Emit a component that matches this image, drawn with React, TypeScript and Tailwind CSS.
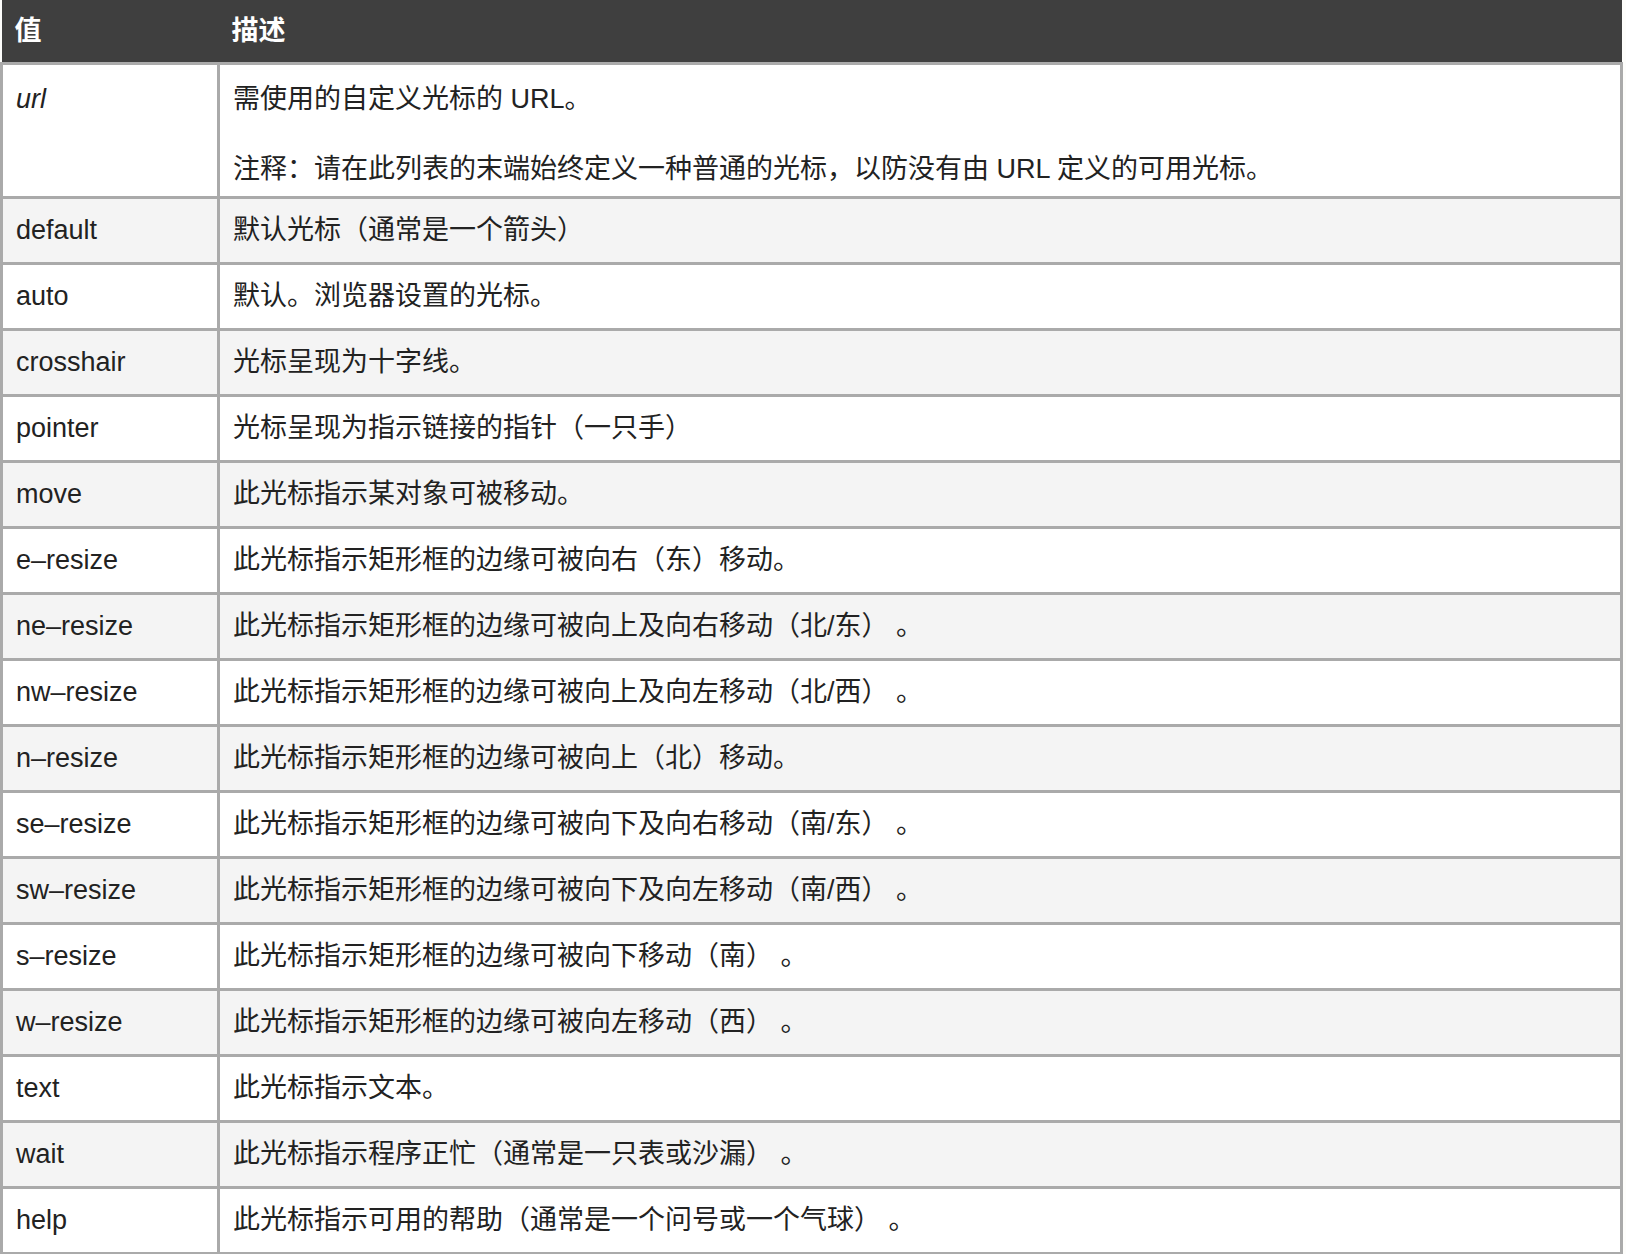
const rows: [string, string][] = [
  ["default", "默认光标（通常是一个箭头）"],
  ["auto", "默认。浏览器设置的光标。"],
  ["crosshair", "光标呈现为十字线。"],
  ["pointer", "光标呈现为指示链接的指针（一只手）"],
  ["move", "此光标指示某对象可被移动。"],
  ["e-resize", "此光标指示矩形框的边缘可被向右（东）移动。"],
  ["ne-resize", "此光标指示矩形框的边缘可被向上及向右移动（北/东） 。"],
  ["nw-resize", "此光标指示矩形框的边缘可被向上及向左移动（北/西） 。"],
  ["n-resize", "此光标指示矩形框的边缘可被向上（北）移动。"],
  ["se-resize", "此光标指示矩形框的边缘可被向下及向右移动（南/东） 。"],
  ["sw-resize", "此光标指示矩形框的边缘可被向下及向左移动（南/西） 。"],
  ["s-resize", "此光标指示矩形框的边缘可被向下移动（南） 。"],
  ["w-resize", "此光标指示矩形框的边缘可被向左移动（西） 。"],
  ["text", "此光标指示文本。"],
  ["wait", "此光标指示程序正忙（通常是一只表或沙漏） 。"],
  ["help", "此光标指示可用的帮助（通常是一个问号或一个气球） 。"],
];

export default function App() {
  return (
    <div className="w-[1626px] h-[1254px] bg-[#fdfdfb] overflow-hidden">
      <table
        className="w-[1623px] border-collapse text-[27px] text-[#222]"
        style={{ fontFamily: '"Liberation Sans", "Noto Sans CJK SC", sans-serif' }}
      >
        <thead>
          <tr className="h-[63px] bg-[#3f3f3f] text-white font-bold">
            <th className="w-[217px] text-left px-[13px] align-middle">值</th>
            <th className="text-left px-[13px] align-middle">描述</th>
          </tr>
        </thead>
        <tbody>
          <tr className="h-[134px] bg-white">
            <td className="border-[3px] border-[#aaa] px-[13px] align-top pt-[14px] italic">url</td>
            <td className="border-[3px] border-[#aaa] px-[13px] align-top pt-[14px]">
              <p>需使用的自定义光标的 URL。</p>
              <p className="mt-[30px]">注释：请在此列表的末端始终定义一种普通的光标，以防没有由 URL 定义的可用光标。</p>
            </td>
          </tr>
          {rows.map(([v, d], i) => (
            <tr key={v} className={`h-[66px] ${i % 2 === 0 ? "bg-[#f4f4f4]" : "bg-white"}`}>
              <td className="border-[3px] border-[#aaa] px-[13px] align-middle">{v.replace("-", "–")}</td>
              <td className="border-[3px] border-[#aaa] px-[13px] align-middle">{d}</td>
            </tr>
          ))}
        </tbody>
      </table>
    </div>
  );
}
